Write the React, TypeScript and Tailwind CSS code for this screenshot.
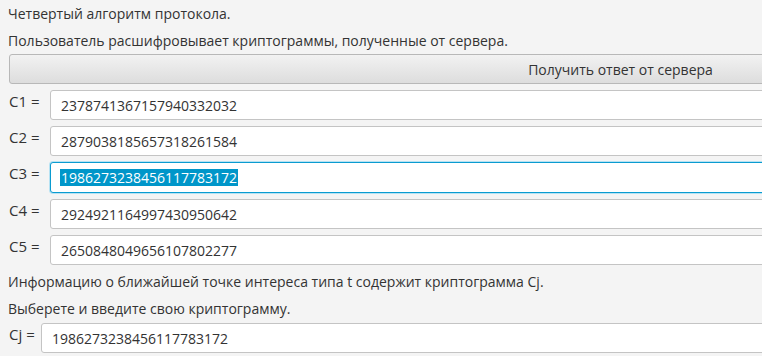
import React from 'react'

const rows = [
  { label: 'C1 =', value: '2378741367157940332032' },
  { label: 'C2 =', value: '2879038185657318261584' },
  { label: 'C3 =', value: '1986273238456117783172', focused: true },
  { label: 'C4 =', value: '2924921164997430950642' },
  { label: 'C5 =', value: '2650848049656107802277' },
]

function Field({ value, focused }: { value: string; focused?: boolean }) {
  if (focused) {
    return (
      <div className="flex-1 h-[31px] bg-white rounded-[3px] border border-[#0a9bd0] shadow-[0_0_0_1px_#b6e2f3] flex items-center pl-[9px]">
        <span className="bg-[#0096c9] text-white leading-[17px] px-[1px]">{value}</span>
      </div>
    )
  }
  return (
    <div className="flex-1 h-[30px] bg-white rounded-[3px] border border-[#c4c4c4] flex items-center pl-[10px] text-[#333333]">
      {value}
    </div>
  )
}

export default function App() {
  return (
    <div
      className="w-[762px] h-[356px] overflow-hidden bg-[#f4f4f4] text-[#333333] text-[14px]"
      style={{ fontFamily: '"Open Sans", "Noto Sans", sans-serif' }}
    >
      <div className="w-[1240px] pl-[8px]">
        <div className="h-[27px] leading-[27px]">Четвертый алгоритм протокола.</div>
        <div className="h-[27px] leading-[27px]">Пользователь расшифровывает криптограммы, полученные от сервера.</div>

        <button className="w-[1223px] ml-[1px] h-[30px] rounded-[3px] border border-[#b8b8b8] bg-gradient-to-b from-[#f2f2f2] to-[#dddddd] text-[#333333] text-[14px] flex items-center justify-center">
          Получить ответ от сервера
        </button>

        <div className="mt-[6px] flex flex-col gap-[6px]">
          {rows.map((r) => (
            <div key={r.label} className="flex items-start">
              <div className="w-[42px] pl-[1px] text-[15px] leading-[22px]">{r.label}</div>
              <Field value={r.value} focused={r.focused} />
            </div>
          ))}
        </div>

        <div className="mt-[2px] h-[29px] leading-[29px]">
          Информацию о ближайшей точке интереса типа t содержит криптограмма Cj.
        </div>
        <div className="h-[26px] leading-[26px]">Выберете и введите свою криптограмму.</div>

        <div className="mt-[1px] flex items-start">
          <div className="w-[33px] pl-[1px] text-[15px] leading-[22px]">Cj =</div>
          <Field value="1986273238456117783172" />
        </div>
      </div>
    </div>
  )
}
